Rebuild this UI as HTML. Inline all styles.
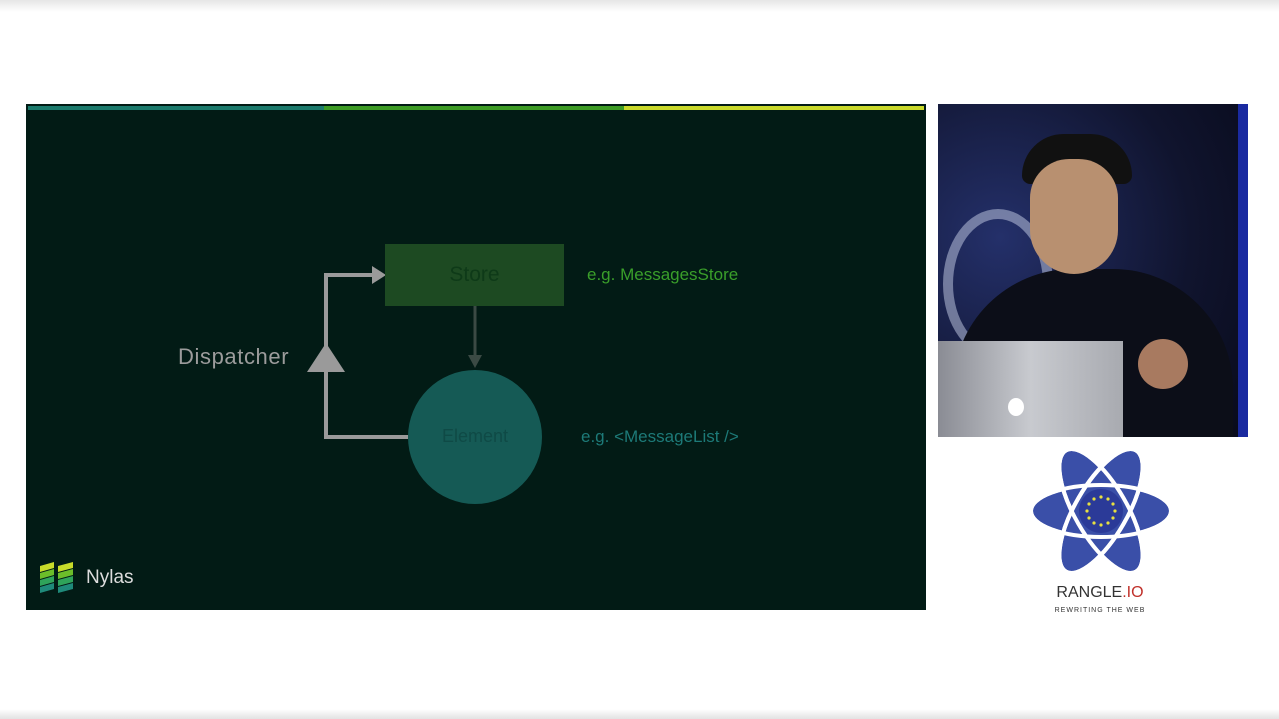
<!DOCTYPE html>
<html><head><style>
body{margin:0;width:1279px;height:719px;background:#fff;position:relative;overflow:hidden;font-family:"Liberation Sans",sans-serif}
.a{position:absolute}
</style></head><body>
<div class="a" style="left:0;top:0;width:1279px;height:12px;background:linear-gradient(#e6e6e6,#fff)"></div>
<div class="a" style="left:0;bottom:0;width:1279px;height:10px;background:linear-gradient(#fff,#e2e2e2)"></div>
<div class="a" style="left:26px;top:104px;width:900px;height:506px;background:#021b15"></div>
<div class="a" style="left:28px;top:106px;width:296px;height:4px;background:#1b7a6c"></div>
<div class="a" style="left:324px;top:106px;width:300px;height:4px;background:#3d9b25"></div>
<div class="a" style="left:624px;top:106px;width:300px;height:4px;background:#c9d92a"></div>
<svg class="a" style="left:0;top:0" width="940" height="620">
<polyline points="408,437 326,437 326,275 374,275" fill="none" stroke="#9a9a9a" stroke-width="4"/>
<polygon points="372,266 386,275 372,284" fill="#9a9a9a"/>
<polygon points="307,372 345,372 326,343" fill="#9a9a9a"/>
<line x1="475" y1="306" x2="475" y2="358" stroke="#3b4a44" stroke-width="3"/>
<polygon points="468,355 482,355 475,368" fill="#3b4a44"/>
<rect x="385" y="244" width="179" height="62" fill="#1d4a22"/>
<circle cx="475" cy="437" r="67" fill="#155a55"/>
<g transform="translate(40,562)">
<polygon points="0,4 14,0 14,6 0,10" fill="#c8dc2a"/><polygon points="0,11 14,7 14,13 0,17" fill="#6cbd2a"/>
<polygon points="0,18 14,14 14,20 0,24" fill="#2fa35a"/><polygon points="0,25 14,21 14,27 0,31" fill="#1f8a7a"/>
<polygon points="18,4 33,0 33,6 18,10" fill="#c8dc2a"/><polygon points="18,11 33,7 33,13 18,17" fill="#6cbd2a"/>
<polygon points="18,18 33,14 33,20 18,24" fill="#2fa35a"/><polygon points="18,25 33,21 33,27 18,31" fill="#1f8a7a"/>
</g>
</svg>
<div class="a" style="left:385px;top:263px;width:179px;text-align:center;color:#0e3a18;font-size:21px">Store</div>
<div class="a" style="left:400px;top:426px;width:150px;text-align:center;color:#0f4a46;font-size:18px">Element</div>
<div class="a" style="left:178px;top:344px;color:#9c9c9c;font-size:22px;letter-spacing:0.6px">Dispatcher</div>
<div class="a" style="left:587px;top:265px;color:#3a9f2a;font-size:17px">e.g. MessagesStore</div>
<div class="a" style="left:581px;top:427px;color:#1d7a78;font-size:17px">e.g. &lt;MessageList /&gt;</div>
<div class="a" style="left:86px;top:567px;color:#ddd;font-size:19px">Nylas</div>
<div class="a" style="left:938px;top:104px;width:310px;height:333px;background:radial-gradient(circle at 20% 40%,#24306a,#10142e 60%,#080a1a);overflow:hidden">
<div class="a" style="right:0;top:0;width:10px;height:333px;background:#1a2aa0"></div>
<div class="a" style="left:5px;top:105px;width:90px;height:130px;border:10px solid #c8d0e8;border-radius:50%;opacity:.5"></div>
<div class="a" style="left:15px;top:165px;width:280px;height:180px;background:#0c0e18;border-radius:120px 120px 0 0"></div>
<div class="a" style="left:84px;top:30px;width:110px;height:50px;background:#111;border-radius:50px 50px 10px 10px"></div>
<div class="a" style="left:92px;top:55px;width:88px;height:115px;background:#b89070;border-radius:40px 40px 45px 45px"></div>
<div class="a" style="left:0;top:237px;width:185px;height:96px;background:linear-gradient(90deg,#8a8c94,#c8cacf,#a8aab0)"></div>
<div class="a" style="left:70px;top:294px;width:16px;height:18px;background:#fff;border-radius:50%"></div>
<div class="a" style="left:200px;top:235px;width:50px;height:50px;background:#a87a60;border-radius:50%"></div>
</div>
<svg class="a" style="left:1028px;top:446px" width="146" height="130" viewBox="-73 -65 146 130">
<g fill="#3a4fa8" stroke="#fff" stroke-width="4">
<ellipse rx="70" ry="26"/><ellipse rx="70" ry="26" transform="rotate(60)"/><ellipse rx="70" ry="26" transform="rotate(-60)"/>
</g>
<g fill="none" stroke="#fff" stroke-width="4">
<ellipse rx="70" ry="26"/><ellipse rx="70" ry="26" transform="rotate(60)"/><ellipse rx="70" ry="26" transform="rotate(-60)"/>
</g>
<circle r="22" fill="#2b3a98"/>
<g fill="#e8e040"><circle cx="0" cy="-14" r="1.6"/><circle cx="7" cy="-12" r="1.6"/><circle cx="12" cy="-7" r="1.6"/><circle cx="14" cy="0" r="1.6"/><circle cx="12" cy="7" r="1.6"/><circle cx="7" cy="12" r="1.6"/><circle cx="0" cy="14" r="1.6"/><circle cx="-7" cy="12" r="1.6"/><circle cx="-12" cy="7" r="1.6"/><circle cx="-14" cy="0" r="1.6"/><circle cx="-12" cy="-7" r="1.6"/><circle cx="-7" cy="-12" r="1.6"/></g>
</svg>
<div class="a" style="left:1040px;top:584px;width:120px;text-align:center;font-size:16px;color:#333">RANGLE<span style="color:#c0302a">.IO</span></div>
<div class="a" style="left:1040px;top:607px;width:120px;text-align:center;font-size:7px;color:#333;letter-spacing:1px">REWRITING THE WEB</div>
</body></html>
